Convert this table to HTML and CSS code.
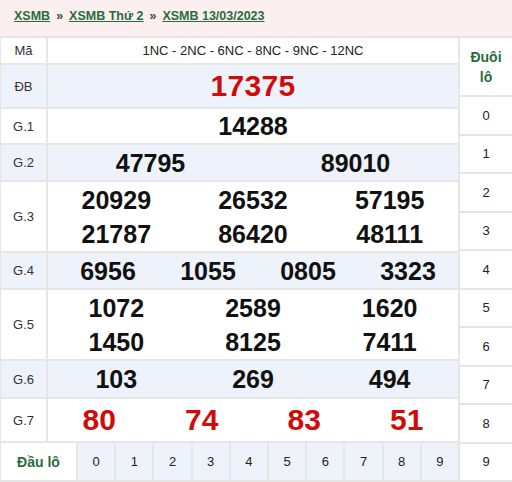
FILE: index.html
```html
<!DOCTYPE html>
<html lang="vi">
<head>
<meta charset="utf-8">
<title>XSMB 13/03/2023</title>
<link rel="stylesheet" href="styles.css">
</head>
<body>
<div class="crumbs">
  <a href="#">XSMB</a><span class="sep">»</span><a href="#">XSMB Thứ 2</a><span class="sep">»</span><a href="#">XSMB 13/03/2023</a>
</div>
<div class="board">
  <div class="left">
    <div class="row r-ma">
      <div class="lbl">Mã</div>
      <div class="val codes">1NC - 2NC - 6NC - 8NC - 9NC - 12NC</div>
    </div>
    <div class="row r-db alt">
      <div class="lbl">ĐB</div>
      <div class="val c1"><span class="num red big">17375</span></div>
    </div>
    <div class="row r-g1">
      <div class="lbl">G.1</div>
      <div class="val c1"><span class="num">14288</span></div>
    </div>
    <div class="row r-g2 alt">
      <div class="lbl">G.2</div>
      <div class="val c2"><span class="num">47795</span><span class="num">89010</span></div>
    </div>
    <div class="row r-g3">
      <div class="lbl">G.3</div>
      <div class="val c3 two">
        <span class="num">20929</span><span class="num">26532</span><span class="num">57195</span>
        <span class="num">21787</span><span class="num">86420</span><span class="num">48111</span>
      </div>
    </div>
    <div class="row r-g4 alt">
      <div class="lbl">G.4</div>
      <div class="val c4 shift"><span class="num">6956</span><span class="num">1055</span><span class="num">0805</span><span class="num">3323</span></div>
    </div>
    <div class="row r-g5">
      <div class="lbl">G.5</div>
      <div class="val c3 two">
        <span class="num">1072</span><span class="num">2589</span><span class="num">1620</span>
        <span class="num">1450</span><span class="num">8125</span><span class="num">7411</span>
      </div>
    </div>
    <div class="row r-g6 alt">
      <div class="lbl">G.6</div>
      <div class="val c3"><span class="num">103</span><span class="num">269</span><span class="num">494</span></div>
    </div>
    <div class="row r-g7">
      <div class="lbl">G.7</div>
      <div class="val c4"><span class="num red mid">80</span><span class="num red mid">74</span><span class="num red mid">83</span><span class="num red mid">51</span></div>
    </div>
    <div class="dau">
      <div class="dau-lbl">Đầu lô</div>
      <div class="d">0</div><div class="d">1</div><div class="d">2</div><div class="d">3</div><div class="d">4</div>
      <div class="d">5</div><div class="d">6</div><div class="d">7</div><div class="d">8</div><div class="d">9</div>
    </div>
  </div>
  <div class="right">
    <div class="duoi-lbl">Đuôi<br>lô</div>
    <div class="t">0</div><div class="t">1</div><div class="t">2</div><div class="t">3</div><div class="t">4</div>
    <div class="t">5</div><div class="t">6</div><div class="t">7</div><div class="t">8</div><div class="t">9</div>
  </div>
</div>
</body>
</html>
```
FILE: styles.css
```css
* { box-sizing: border-box; }
html, body { margin: 0; padding: 0; }
body {
  width: 512px;
  height: 482px;
  overflow: hidden;
  background: #ffffff;
  font-family: "Liberation Sans", Arial, sans-serif;
  color: #222;
}
.crumbs {
  height: 36px;
  background: #fcefef;
  padding: 9px 0 0 14px;
  font-size: 12.5px;
  font-weight: bold;
  line-height: 15px;
}
.crumbs a {
  color: #2a6b3d;
  text-decoration: underline;
}
.crumbs .sep {
  color: #444;
  margin: 0 6px;
  font-weight: bold;
}
.board {
  display: flex;
  gap: 2px;
  background: #e6e6e6;
  padding: 2px 0 2px 1px;
}
.left {
  width: 457px;
  display: grid;
  gap: 2px;
}
.row {
  display: grid;
  grid-template-columns: 45px 1fr;
  gap: 2px;
}
.row > div { background: #ffffff; }
.row.alt > div { background: #eef2fa; }
.lbl {
  display: flex;
  align-items: center;
  justify-content: center;
  font-size: 13px;
  color: #333;
}
.r-ma { height: 25px; }
.r-db { height: 42px; }
.r-g1 { height: 34px; }
.r-g2 { height: 35px; }
.r-g3 { height: 69px; }
.r-g4 { height: 35px; }
.r-g5 { height: 69px; }
.r-g6 { height: 36px; }
.r-g7 { height: 42px; }
.codes {
  display: flex;
  align-items: center;
  justify-content: center;
  font-size: 13px;
  color: #222;
}
.val { display: grid; align-items: center; justify-items: center; }
.c1 { grid-template-columns: 1fr; }
.c2 { grid-template-columns: 1fr 1fr; }
.c3 { grid-template-columns: 1fr 1fr 1fr; }
.c4 { grid-template-columns: 1fr 1fr 1fr 1fr; }
.c4.shift { padding-left: 10px; }
.two { grid-template-rows: 34px 34px; align-content: center; }
.num {
  font-size: 25px;
  font-weight: bold;
  color: #111;
  line-height: 30px;
}
.num.red { color: #d10a0a; }
.num.big { font-size: 30px; letter-spacing: 0.3px; }
.num.mid { font-size: 30px; }
.dau {
  height: 37px;
  display: grid;
  grid-template-columns: 75px repeat(10, 1fr);
  gap: 2px;
}
.dau-lbl {
  background: #ffffff;
  display: flex;
  align-items: center;
  justify-content: center;
  color: #2a6b3d;
  font-weight: bold;
  font-size: 14px;
}
.d {
  background: #eef2fa;
  display: flex;
  align-items: center;
  justify-content: center;
  font-size: 13px;
  color: #222;
}
.right {
  flex: 1;
  display: grid;
  grid-template-rows: 57px repeat(10, 1fr);
  gap: 2px;
}
.duoi-lbl {
  background: #ffffff;
  display: flex;
  align-items: center;
  justify-content: center;
  text-align: center;
  color: #2a6b3d;
  font-weight: bold;
  font-size: 14px;
  line-height: 20px;
}
.t {
  background: #ffffff;
  display: flex;
  align-items: center;
  justify-content: center;
  font-size: 13px;
  color: #222;
}
```
